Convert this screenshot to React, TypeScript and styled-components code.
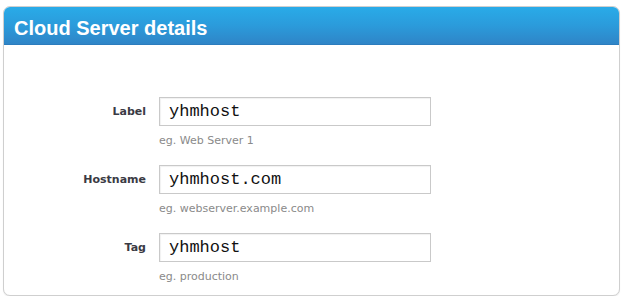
import styled, { createGlobalStyle } from "styled-components";

const GlobalStyle = createGlobalStyle`
  html, body {
    margin: 0;
    padding: 0;
    background: #ffffff;
  }
  body {
    font-family: "Liberation Sans", Arial, sans-serif;
  }
`;

const Panel = styled.div`
  margin: 6px 5px 0 3px;
  height: 290px;
  box-sizing: border-box;
  border: 1px solid #cfcfcf;
  border-radius: 7px;
  overflow: hidden;
  background: #ffffff;
  box-shadow: 0 1px 1px rgba(0, 0, 0, 0.08);
`;

const Header = styled.div`
  height: 38px;
  display: flex;
  align-items: center;
  padding: 5px 0 0 10px;
  box-sizing: border-box;
  background: linear-gradient(to bottom, #29abe8 0%, #2b9bdb 50%, #2f85c7 100%);
  border-bottom: 1px solid #2b7cbd;
`;

const Title = styled.h2`
  margin: 0;
  font-size: 20px;
  font-weight: bold;
  color: #ffffff;
`;

const Form = styled.div`
  display: flex;
  flex-direction: column;
  gap: 17px;
  padding-top: 52px;
`;

const Row = styled.div`
  display: grid;
  grid-template-columns: 142px 1fr;
  column-gap: 13px;
`;

const Label = styled.label`
  justify-self: end;
  align-self: start;
  line-height: 29px;
  font-family: "DejaVu Sans", Verdana, sans-serif;
  font-size: 11px;
  font-weight: bold;
  color: #3a3a44;
`;

const Field = styled.div`
  display: flex;
  flex-direction: column;
`;

const Input = styled.input`
  width: 272px;
  height: 29px;
  box-sizing: border-box;
  border: 1px solid #c9c9c9;
  box-shadow: inset 1px 1px 1px rgba(0, 0, 0, 0.06);
  padding: 0 9px;
  font-family: "Liberation Mono", "DejaVu Sans Mono", monospace;
  font-size: 17px;
  color: #111;
  outline: none;
`;

const Hint = styled.div`
  margin-top: 8px;
  font-family: "DejaVu Sans", Verdana, sans-serif;
  font-size: 11px;
  line-height: 14px;
  color: #8a8a8a;
`;

const fields = [
  { label: "Label", value: "yhmhost", hint: "eg. Web Server 1" },
  { label: "Hostname", value: "yhmhost.com", hint: "eg. webserver.example.com" },
  { label: "Tag", value: "yhmhost", hint: "eg. production" },
];

export default function App() {
  return (
    <>
      <GlobalStyle />
      <Panel>
        <Header>
          <Title>Cloud Server details</Title>
        </Header>
        <Form>
          {fields.map((f) => (
            <Row key={f.label}>
              <Label>{f.label}</Label>
              <Field>
                <Input defaultValue={f.value} readOnly />
                <Hint>{f.hint}</Hint>
              </Field>
            </Row>
          ))}
        </Form>
      </Panel>
    </>
  );
}
